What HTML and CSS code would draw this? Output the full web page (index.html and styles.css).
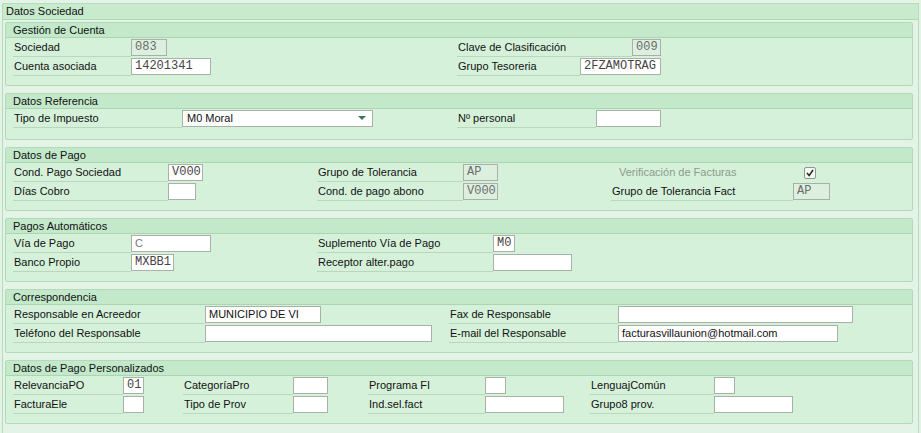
FILE: index.html
```html
<!DOCTYPE html>
<html lang="es">
<head>
<meta charset="utf-8">
<title>Datos Sociedad</title>
<link rel="stylesheet" href="styles.css">
</head>
<body>
<section class="outer">
  <div class="outer-hd">Datos Sociedad</div>
  <div class="outer-bd">

    <div class="grp">
      <div class="grp-hd">Gestión de Cuenta</div>
      <div class="grp-bd c-g1">
        <div class="f"><span class="l lw118">Sociedad</span><span class="in ro mono iw36">083</span></div>
        <div class="f"><span class="l lw175">Clave de Clasificación</span><span class="in ro mono iw29">009</span></div>
        <div class="f"><span class="l lw118">Cuenta asociada</span><span class="in mono iw80">14201341</span></div>
        <div class="f"><span class="l lw123">Grupo Tesoreria</span><span class="in mono iw81">2FZAMOTRAG</span></div>
      </div>
    </div>

    <div class="grp">
      <div class="grp-hd">Datos Referencia</div>
      <div class="grp-bd c-g1 pb11">
        <div class="f"><span class="l lw169">Tipo de Impuesto</span><span class="in sel iw191">M0 Moral</span></div>
        <div class="f"><span class="l lw139">Nº personal</span><span class="in iw65"></span></div>
      </div>
    </div>

    <div class="grp">
      <div class="grp-hd">Datos de Pago</div>
      <div class="grp-bd c-g3">
        <div class="f"><span class="l lw155">Cond. Pago Sociedad</span><span class="in mono iw35">V000</span></div>
        <div class="f"><span class="l lw146">Grupo de Tolerancia</span><span class="in ro mono iw35">AP</span></div>
        <div class="f"><span class="l nol dis lw193">Verificación de Facturas</span><span class="chk"><svg width="10" height="10" viewBox="0 0 10 10"><path d="M2 5 L4.2 7.6 L8 2" stroke="#222" stroke-width="1.5" fill="none"/></svg></span></div>
        <div class="f"><span class="l lw155">Días Cobro</span><span class="in iw28"></span></div>
        <div class="f"><span class="l lw146">Cond. de pago abono</span><span class="in ro mono iw35">V000</span></div>
        <div class="f"><span class="l lw182">Grupo de Tolerancia Fact</span><span class="in ro mono iw37">AP</span></div>
      </div>
    </div>

    <div class="grp">
      <div class="grp-hd">Pagos Automáticos</div>
      <div class="grp-bd c-g4">
        <div class="f"><span class="l lw118">Vía de Pago</span><span class="in grey iw80">C</span></div>
        <div class="f"><span class="l lw176">Suplemento Vía de Pago</span><span class="in mono iw22">M0</span></div>
        <div class="f"><span class="l lw118">Banco Propio</span><span class="in mono iw43">MXBB1</span></div>
        <div class="f"><span class="l lw176">Receptor alter.pago</span><span class="in iw79"></span></div>
      </div>
    </div>

    <div class="grp">
      <div class="grp-hd">Correspondencia</div>
      <div class="grp-bd c-g5">
        <div class="f"><span class="l lw192">Responsable en Acreedor</span><span class="in iw116">MUNICIPIO DE VI</span></div>
        <div class="f"><span class="l lw169">Fax de Responsable</span><span class="in iw235"></span></div>
        <div class="f"><span class="l lw192">Teléfono del Responsable</span><span class="in iw227"></span></div>
        <div class="f"><span class="l lw169">E-mail del Responsable</span><span class="in iw220">facturasvillaunion@hotmail.com</span></div>
      </div>
    </div>

    <div class="grp">
      <div class="grp-hd">Datos de Pago Personalizados</div>
      <div class="grp-bd c-g6">
        <div class="f"><span class="l lw110">RelevanciaPO</span><span class="in mono iw21">01</span></div>
        <div class="f"><span class="l lw110">CategoríaPro</span><span class="in iw35"></span></div>
        <div class="f"><span class="l lw117">Programa FI</span><span class="in iw21"></span></div>
        <div class="f"><span class="l lw124">LenguajComún</span><span class="in iw21"></span></div>
        <div class="f"><span class="l lw110">FacturaEle</span><span class="in iw21"></span></div>
        <div class="f"><span class="l lw110">Tipo de Prov</span><span class="in iw35"></span></div>
        <div class="f"><span class="l lw117">Ind.sel.fact</span><span class="in iw79"></span></div>
        <div class="f"><span class="l lw124">Grupo8 prov.</span><span class="in iw79"></span></div>
      </div>
    </div>

  </div>
</section>
</body>
</html>
```
FILE: styles.css
```css
* { box-sizing: border-box; }
html, body { margin: 0; padding: 0; }
body {
  width: 921px;
  height: 433px;
  overflow: hidden;
  background: #e3f3e6;
  font-family: "Liberation Sans", Arial, sans-serif;
  font-size: 11px;
  color: #111;
}
.outer {
  margin: 3px 0 0 2px;
  width: 917px;
  height: 430px;
  border: 1px solid #b6dcbd;
  border-bottom: none;
  background: #e3f3e6;
}
.outer-hd {
  height: 16px;
  line-height: 14px;
  padding-left: 3px;
  background: #c8eacd;
  border-bottom: 1px solid #afd7b7;
}
.outer-bd {
  padding: 2px 5px 0 2px;
  display: flex;
  flex-direction: column;
  gap: 7px;
}
.grp {
  border: 1px solid #b3d9ba;
  border-radius: 2px;
  background: #d6f1da;
}
.grp-hd {
  height: 15px;
  line-height: 14px;
  padding-left: 7px;
  background: #c3e8ca;
  border-bottom: 1px solid #a9d5b2;
}
.grp-bd {
  display: grid;
  grid-auto-rows: 19px;
  padding: 0 0 9px 7px;
}
.pb11 { padding-bottom: 11px; }
.c-g1 { grid-template-columns: 444px 1fr; }
.c-g3 { grid-template-columns: 304px 294px 1fr; }
.c-g4 { grid-template-columns: 304px 1fr; }
.c-g5 { grid-template-columns: 436px 1fr; }
.c-g6 { grid-template-columns: 170px 185px 222px 1fr; }

.f {
  display: flex;
  align-items: center;
  height: 19px;
}
.l {
  flex: none;
  height: 19px;
  line-height: 19px;
  padding-left: 1px;
  white-space: nowrap;
  border-bottom: 1px solid #bcd5bf;
}
.l.nol { border-bottom-color: transparent; }
.l.dis { color: #8b9b8c; padding-left: 8px; }

.in {
  flex: none;
  height: 17px;
  line-height: 15px;
  padding: 0 3px;
  border: 1px solid #a7b1a8;
  background: #fff;
  color: #111;
  white-space: nowrap;
  overflow: hidden;
}
.ro { background: #ddf0e0; color: #6a6a6a; }
.grey { color: #777; }
.mono {
  font-family: "Liberation Mono", "Courier New", monospace;
  font-size: 12px;
  color: #444;
  padding: 0 3px;
}
.ro.mono { color: #6b6b6b; }
.sel { position: relative; padding-left: 4px; }
.sel::after {
  content: "";
  position: absolute;
  right: 6px;
  top: 5px;
  border-left: 4px solid transparent;
  border-right: 4px solid transparent;
  border-top: 4px solid #3c7a55;
}
.chk {
  flex: none;
  width: 12px;
  height: 12px;
  border: 1px solid #8e988f;
  border-radius: 2px;
  background: #f3f8f3;
  display: flex;
  align-items: center;
  justify-content: center;
}
.chk svg { display: block; }

.lw110 { width: 110px; }
.lw117 { width: 117px; }
.lw118 { width: 118px; }
.lw123 { width: 123px; }
.lw124 { width: 124px; }
.lw139 { width: 139px; }
.lw146 { width: 146px; }
.lw155 { width: 155px; }
.lw169 { width: 169px; }
.lw175 { width: 175px; }
.lw176 { width: 176px; }
.lw182 { width: 182px; }
.lw192 { width: 192px; }
.lw193 { width: 193px; }

.iw21 { width: 21px; }
.iw22 { width: 22px; }
.iw28 { width: 28px; }
.iw29 { width: 29px; }
.iw35 { width: 35px; }
.iw36 { width: 36px; }
.iw37 { width: 37px; }
.iw43 { width: 43px; }
.iw65 { width: 65px; }
.iw79 { width: 79px; }
.iw80 { width: 80px; }
.iw81 { width: 81px; }
.iw116 { width: 116px; }
.iw191 { width: 191px; }
.iw220 { width: 220px; }
.iw227 { width: 227px; }
.iw235 { width: 235px; }
```
